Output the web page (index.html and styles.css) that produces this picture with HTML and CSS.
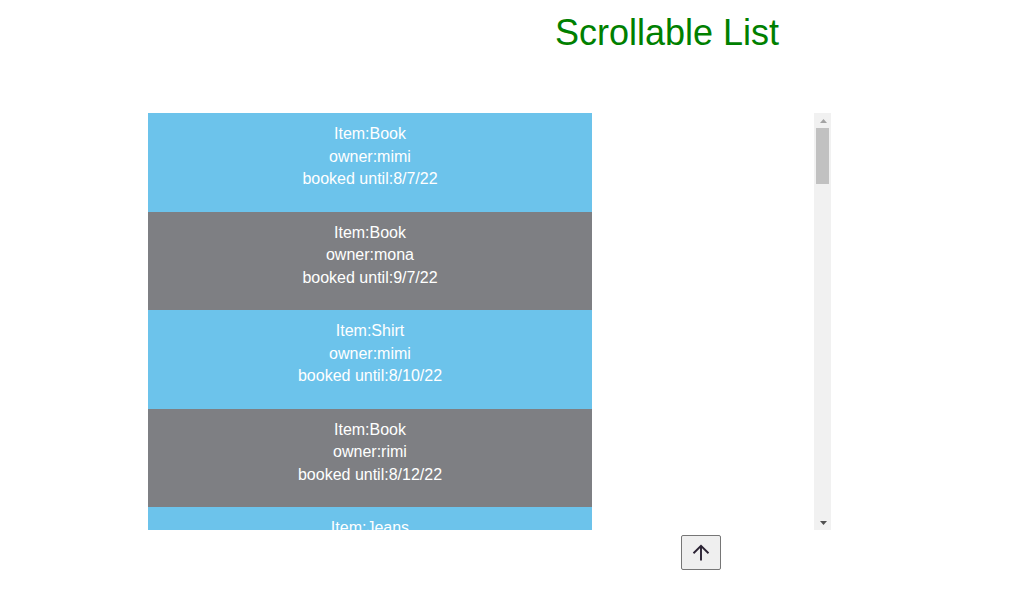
FILE: index.html
```html
<!DOCTYPE html>
<html lang="en">
<head>
<meta charset="utf-8">
<title>Scrollable List</title>
<link rel="stylesheet" href="styles.css">
</head>
<body>
<div class="page">
  <h1 class="title">Scrollable List</h1>
  <div class="scroller">
    <div class="list">
      <div class="item blue">Item:Book<br>owner:mimi<br>booked until:8/7/22</div>
      <div class="item gray">Item:Book<br>owner:mona<br>booked until:9/7/22</div>
      <div class="item blue">Item:Shirt<br>owner:mimi<br>booked until:8/10/22</div>
      <div class="item gray">Item:Book<br>owner:rimi<br>booked until:8/12/22</div>
      <div class="item blue">Item:Jeans<br>owner:mona<br>booked until:8/14/22</div>
      <div class="item gray">Item:Book<br>owner:mimi<br>booked until:8/15/22</div>
      <div class="item blue">Item:Shirt<br>owner:rimi<br>booked until:8/16/22</div>
      <div class="item gray">Item:Jeans<br>owner:mimi<br>booked until:8/17/22</div>
      <div class="item blue">Item:Book<br>owner:mona<br>booked until:8/18/22</div>
      <div class="item gray">Item:Shirt<br>owner:mona<br>booked until:8/19/22</div>
      <div class="item blue">Item:Book<br>owner:rimi<br>booked until:8/20/22</div>
      <div class="item gray">Item:Jeans<br>owner:rimi<br>booked until:8/21/22</div>
      <div class="item blue">Item:Book<br>owner:mimi<br>booked until:8/22/22</div>
      <div class="item gray">Item:Shirt<br>owner:mimi<br>booked until:8/23/22</div>
      <div class="item blue">Item:Book<br>owner:mona<br>booked until:8/24/22</div>
      <div class="item gray">Item:Jeans<br>owner:mona<br>booked until:8/25/22</div>
      <div class="item blue">Item:Book<br>owner:rimi<br>booked until:8/26/22</div>
      <div class="item gray">Item:Shirt<br>owner:rimi<br>booked until:8/27/22</div>
      <div class="item blue">Item:Book<br>owner:mimi<br>booked until:8/28/22</div>
      <div class="item gray">Item:Jeans<br>owner:mimi<br>booked until:8/29/22</div>
      <div class="item blue">Item:Book<br>owner:mona<br>booked until:8/30/22</div>
      <div class="item gray">Item:Shirt<br>owner:mona<br>booked until:8/31/22</div>
      <div class="item blue">Item:Book<br>owner:rimi<br>booked until:9/1/22</div>
      <div class="item gray">Item:Jeans<br>owner:rimi<br>booked until:9/2/22</div>
      <div class="item blue">Item:Book<br>owner:mimi<br>booked until:9/3/22</div>
      <div class="item gray">Item:Shirt<br>owner:mimi<br>booked until:9/4/22</div>
      <div class="item blue">Item:Book<br>owner:mona<br>booked until:9/5/22</div>
      <div class="item gray">Item:Jeans<br>owner:mona<br>booked until:9/6/22</div>
      <div class="item blue">Item:Book<br>owner:rimi<br>booked until:9/8/22</div>
      <div class="item gray">Item:Shirt<br>owner:rimi<br>booked until:9/9/22</div>
    </div>
    <div class="scrollbar" aria-hidden="true">
      <div class="sb-btn">
        <svg width="7" height="4" viewBox="0 0 7 4"><polygon points="0,4 3.5,0 7,4" fill="#a3a3a3"/></svg>
      </div>
      <div class="sb-track">
        <div class="sb-thumb"></div>
      </div>
      <div class="sb-btn">
        <svg width="7" height="4" viewBox="0 0 7 4"><polygon points="0,0 7,0 3.5,4" fill="#505050"/></svg>
      </div>
    </div>
  </div>
  <div class="controls">
    <button class="top-btn" type="button" aria-label="Scroll to top">
      <svg width="20" height="20" viewBox="0 0 20 20" aria-hidden="true">
        <path d="M10 17.5V3M2.5 10.2L10 2.8L17.5 10.2" fill="none" stroke="#2b2233" stroke-width="1.9"/>
      </svg>
    </button>
  </div>
</div>
</body>
</html>
```
FILE: styles.css
```css
html, body {
  margin: 0;
  padding: 0;
  background: #ffffff;
}

body {
  font-family: "Liberation Sans", Arial, sans-serif;
}

.page {
  padding-top: 12px;
}

.title {
  margin: 0 0 60px 555px;
  font-size: 36px;
  font-weight: normal;
  line-height: 41px;
  color: #008000;
}

.scroller {
  display: flex;
  margin-left: 148px;
  width: 683px;
  height: 417px;
}

.list {
  flex: 1;
  overflow-y: scroll;
  scrollbar-width: none;
}

.list::-webkit-scrollbar {
  display: none;
}

.scrollbar {
  display: flex;
  flex-direction: column;
  width: 17px;
  background: #f1f1f1;
}

.sb-btn {
  display: flex;
  align-items: center;
  justify-content: center;
  height: 15px;
  padding-left: 1px;
}

.sb-btn svg {
  display: block;
}

.sb-track {
  flex: 1;
  padding: 0 2px;
}

.sb-thumb {
  height: 56px;
  background: #c1c1c1;
}

.item {
  width: 66.6667%;
  height: 98.5px;
  box-sizing: border-box;
  padding-top: 10px;
  text-align: center;
  color: #ffffff;
  font-size: 16px;
  line-height: 22.6px;
}

.blue {
  background: #6cc3eb;
}

.gray {
  background: #7e7f83;
}

.controls {
  padding: 5px 0 0 681px;
}

.top-btn {
  display: flex;
  align-items: center;
  justify-content: center;
  width: 40px;
  height: 35px;
  padding: 0;
  border: 1px solid #767676;
  border-radius: 2px;
  background: #efefef;
  cursor: pointer;
}

.top-btn svg {
  display: block;
}
```
